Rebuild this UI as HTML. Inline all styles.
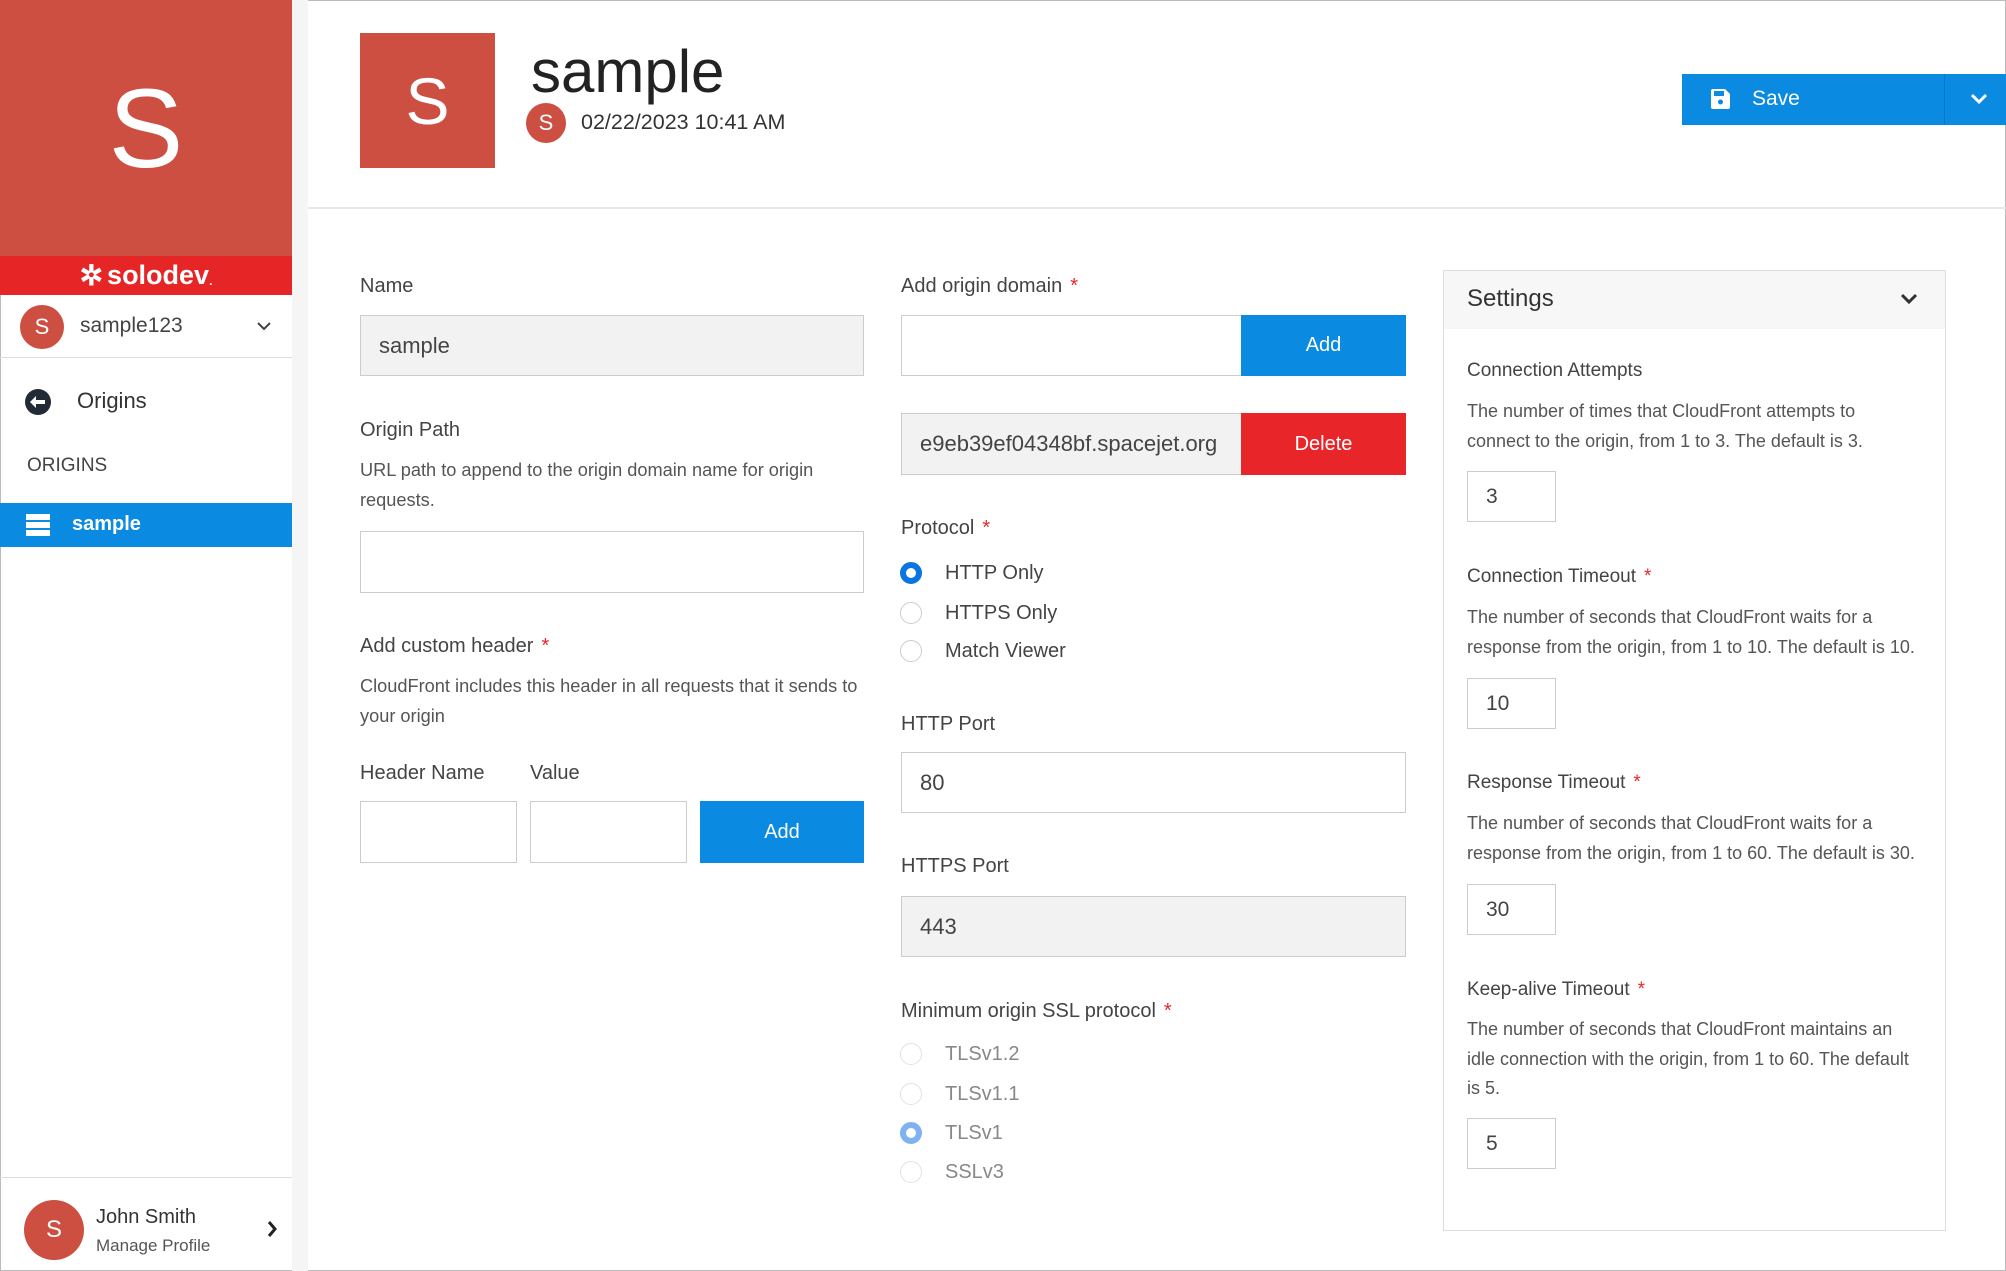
<!DOCTYPE html>
<html><head><meta charset="utf-8"><style>
*{box-sizing:border-box;margin:0;padding:0}
body{width:2006px;height:1271px;position:relative;overflow:hidden;background:#fff;font-family:"Liberation Sans",Arial,sans-serif;color:#333}
.a{position:absolute;white-space:nowrap}
.lbl{font-size:20px;color:#444;line-height:24px}
.desc{font-size:18.2px;color:#555;line-height:29.5px;white-space:normal}
.inp{position:absolute;border:1px solid #ccc;background:#fff;font-size:22px;color:#444;padding-left:18px;display:flex;align-items:center}
.gray{background:#f2f2f2}
.btn{position:absolute;color:#fff;font-size:20px;display:flex;align-items:center;justify-content:center}
.req{color:#e8262a;margin-left:8px}
.radio{position:absolute;width:22px;height:22px;border-radius:50%;border:1.5px solid #ccc;background:#fff}
.radio.on{border:6px solid #0a74e0}
.radio.on2{border:6px solid #7fb2f0}
.rl{font-size:20px;color:#444;line-height:24px}
.rl.dim{color:#888}
.sd{font-size:18px;width:452px}
</style></head><body>
<div class="a" style="left:0;top:0;width:2006px;height:1271px;border:1px solid #bbb"></div>
<div class="a" style="left:292px;top:0;width:16px;height:1271px;background:#f5f5f5"></div>
<div class="a" style="left:0;top:0;width:292px;height:256px;background:#cc4f42;color:#fff;font-size:112px;display:flex;align-items:center;justify-content:center">S</div>
<div class="a" style="left:0;top:256px;width:292px;height:39px;background:#e62526;color:#fff;font-size:27px;font-weight:bold;display:flex;align-items:center;justify-content:center"><span style="font-size:28px;margin-right:4px">✲</span>solodev<span style="font-size:12px;margin-top:10px">.</span></div>
<div class="a" style="left:0;top:295px;width:292px;height:63px;border-bottom:1px solid #ddd"></div>
<div class="a" style="left:20px;top:305px;width:44px;height:44px;border-radius:50%;background:#cc4f42;color:#fff;font-size:22px;display:flex;align-items:center;justify-content:center">S</div>
<div class="a" style="left:80px;top:314px;font-size:21px;color:#444">sample123</div>
<svg class="a" style="left:256px;top:320px" width="16" height="12" viewBox="0 0 16 12"><path d="M2 3l6 6 6-6" stroke="#444" stroke-width="2" fill="none"/></svg>
<svg class="a" style="left:24px;top:388px" width="28" height="28" viewBox="0 0 28 28"><circle cx="14" cy="14" r="13" fill="#222a35"/><path d="M6 14l6-6v4h9v4h-9v4z" fill="#fff"/></svg>
<div class="a" style="left:77px;top:388px;font-size:22px;color:#333">Origins</div>
<div class="a" style="left:27px;top:455px;font-size:19px;color:#444">ORIGINS</div>
<div class="a" style="left:0;top:503px;width:292px;height:44px;background:#0a8ae0"></div>
<svg class="a" style="left:26px;top:514px" width="24" height="22" viewBox="0 0 24 22"><rect x="0" y="0" width="24" height="6" fill="#fff"/><rect x="0" y="8" width="24" height="6" fill="#fff"/><rect x="0" y="16" width="24" height="6" fill="#fff"/></svg>
<div class="a" style="left:72px;top:513px;font-size:20px;color:#fff;font-weight:bold">sample</div>
<div class="a" style="left:0;top:1177px;width:292px;height:1px;background:#ddd"></div>
<div class="a" style="left:24px;top:1200px;width:60px;height:60px;border-radius:50%;background:#cc4f42;color:#fff;font-size:24px;display:flex;align-items:center;justify-content:center">S</div>
<div class="a" style="left:96px;top:1206px;font-size:20px;color:#333">John Smith</div>
<div class="a" style="left:96px;top:1236px;font-size:17px;color:#555">Manage Profile</div>
<svg class="a" style="left:266px;top:1220px" width="12" height="18" viewBox="0 0 12 18"><path d="M3 2l6 7-6 7" stroke="#222" stroke-width="3" fill="none"/></svg>
<div class="a" style="left:360px;top:33px;width:135px;height:135px;background:#cc4f42;color:#fff;font-size:66px;display:flex;align-items:center;justify-content:center">S</div>
<div class="a" style="left:531px;top:38px;font-size:60px;color:#222;line-height:68px">sample</div>
<div class="a" style="left:526px;top:103px;width:40px;height:40px;border-radius:50%;background:#cc4f42;color:#fff;font-size:22px;display:flex;align-items:center;justify-content:center">S</div>
<div class="a" style="left:581px;top:110px;font-size:21.5px;color:#333">02/22/2023 10:41 AM</div>
<div class="a" style="left:1682px;top:74px;width:324px;height:51px;background:#0a8ae0"></div>
<div class="a" style="left:1944px;top:74px;width:1px;height:51px;background:#0878c4"></div>
<svg class="a" style="left:1711px;top:89px" width="19" height="20" viewBox="0 0 19 20"><path d="M0 2a2 2 0 012-2h12l5 5v13a2 2 0 01-2 2H2a2 2 0 01-2-2z" fill="#fff"/><rect x="3" y="2" width="10" height="5" fill="#0a8ae0"/><circle cx="9.5" cy="13" r="2.5" fill="#0a8ae0"/></svg>
<div class="a" style="left:1752px;top:87px;font-size:21px;color:#fff">Save</div>
<svg class="a" style="left:1970px;top:92px" width="18" height="13" viewBox="0 0 18 13"><path d="M2 3l7 7 7-7" stroke="#fff" stroke-width="3" fill="none"/></svg>
<div class="a" style="left:308px;top:207px;width:1698px;height:2px;background:#e8e8e8"></div>
<div class="a lbl" style="left:360px;top:274px">Name</div>
<div class="inp gray" style="left:360px;top:315px;width:504px;height:61px">sample</div>
<div class="a lbl" style="left:360px;top:418px">Origin Path</div>
<div class="a desc" style="left:360px;top:456px;width:500px">URL path to append to the origin domain name for origin requests.</div>
<div class="inp" style="left:360px;top:531px;width:504px;height:62px"></div>
<div class="a lbl" style="left:360px;top:634px">Add custom header<span class="req">*</span></div>
<div class="a desc" style="left:360px;top:672px;width:505px">CloudFront includes this header in all requests that it sends to your origin</div>
<div class="a lbl" style="left:360px;top:761px">Header Name</div>
<div class="a lbl" style="left:530px;top:761px">Value</div>
<div class="inp" style="left:360px;top:801px;width:157px;height:62px"></div>
<div class="inp" style="left:530px;top:801px;width:157px;height:62px"></div>
<div class="btn" style="left:700px;top:801px;width:164px;height:62px;background:#0a8ae0">Add</div>
<div class="a lbl" style="left:901px;top:274px">Add origin domain<span class="req">*</span></div>
<div class="inp" style="left:901px;top:315px;width:341px;height:61px"></div>
<div class="btn" style="left:1241px;top:315px;width:165px;height:61px;background:#0a8ae0">Add</div>
<div class="inp gray" style="left:901px;top:413px;width:341px;height:62px">e9eb39ef04348bf.spacejet.org</div>
<div class="btn" style="left:1241px;top:413px;width:165px;height:62px;background:#e8262a">Delete</div>
<div class="a lbl" style="left:901px;top:516px">Protocol<span class="req">*</span></div>
<div class="radio on" style="left:900px;top:562px"></div><div class="a rl" style="left:945px;top:561px">HTTP Only</div>
<div class="radio" style="left:900px;top:602px"></div><div class="a rl" style="left:945px;top:601px">HTTPS Only</div>
<div class="radio" style="left:900px;top:640px"></div><div class="a rl" style="left:945px;top:639px">Match Viewer</div>
<div class="a lbl" style="left:901px;top:712px">HTTP Port</div>
<div class="inp" style="left:901px;top:752px;width:505px;height:61px">80</div>
<div class="a lbl" style="left:901px;top:854px">HTTPS Port</div>
<div class="inp gray" style="left:901px;top:896px;width:505px;height:61px">443</div>
<div class="a lbl" style="left:901px;top:999px">Minimum origin SSL protocol<span class="req">*</span></div>
<div class="radio" style="left:900px;top:1043px;border-color:#e2e2e2"></div><div class="a rl dim" style="left:945px;top:1042px">TLSv1.2</div>
<div class="radio" style="left:900px;top:1083px;border-color:#e2e2e2"></div><div class="a rl dim" style="left:945px;top:1082px">TLSv1.1</div>
<div class="radio on2" style="left:900px;top:1122px"></div><div class="a rl dim" style="left:945px;top:1121px">TLSv1</div>
<div class="radio" style="left:900px;top:1161px;border-color:#e2e2e2"></div><div class="a rl dim" style="left:945px;top:1160px">SSLv3</div>
<div class="a" style="left:1443px;top:270px;width:503px;height:961px;border:1px solid #ddd"></div>
<div class="a" style="left:1444px;top:271px;width:501px;height:58px;background:#f7f7f7"></div>
<div class="a" style="left:1467px;top:285px;font-size:24px;color:#333">Settings</div>
<svg class="a" style="left:1900px;top:292px" width="18" height="13" viewBox="0 0 18 13"><path d="M2 3l7 7 7-7" stroke="#333" stroke-width="3" fill="none"/></svg>
<div class="a lbl" style="left:1467px;top:359px;font-size:19px">Connection Attempts</div>
<div class="a desc sd" style="left:1467px;top:397px">The number of times that CloudFront attempts to connect to the origin, from 1 to 3. The default is 3.</div>
<div class="inp" style="left:1467px;top:471px;width:89px;height:51px;font-size:21px">3</div>
<div class="a lbl" style="left:1467px;top:565px;font-size:19px">Connection Timeout<span class="req">*</span></div>
<div class="a desc sd" style="left:1467px;top:603px;width:462px">The number of seconds that CloudFront waits for a response from the origin, from 1 to 10. The default is 10.</div>
<div class="inp" style="left:1467px;top:678px;width:89px;height:51px;font-size:21px">10</div>
<div class="a lbl" style="left:1467px;top:771px;font-size:19px">Response Timeout<span class="req">*</span></div>
<div class="a desc sd" style="left:1467px;top:809px;width:462px">The number of seconds that CloudFront waits for a response from the origin, from 1 to 60. The default is 30.</div>
<div class="inp" style="left:1467px;top:884px;width:89px;height:51px;font-size:21px">30</div>
<div class="a lbl" style="left:1467px;top:978px;font-size:19px">Keep-alive Timeout<span class="req">*</span></div>
<div class="a desc sd" style="left:1467px;top:1015px;width:452px">The number of seconds that CloudFront maintains an idle connection with the origin, from 1 to 60. The default is 5.</div>
<div class="inp" style="left:1467px;top:1118px;width:89px;height:51px;font-size:21px">5</div>
</body></html>
